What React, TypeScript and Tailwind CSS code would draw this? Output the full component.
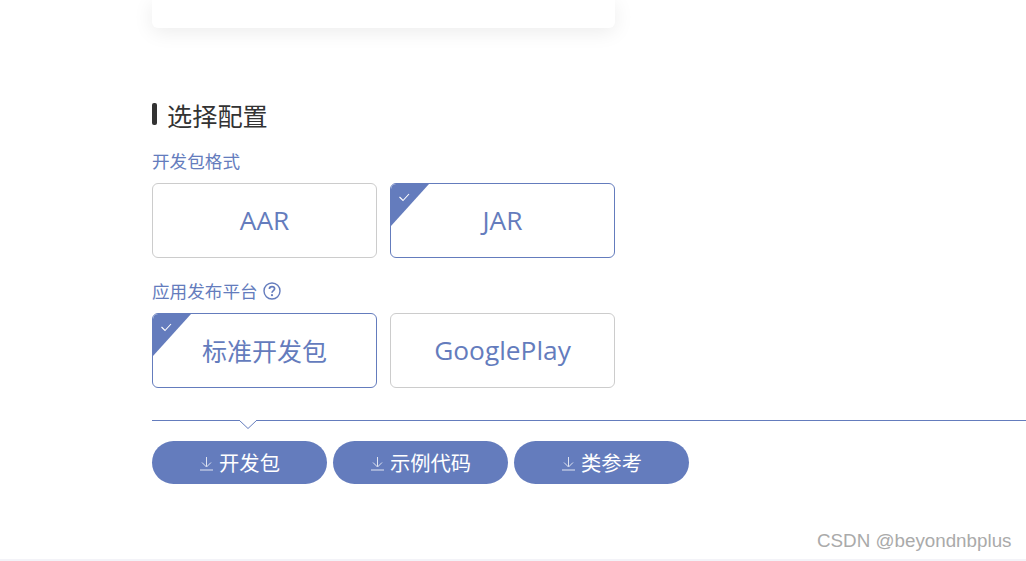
import React from "react";

function Corner() {
  return (
    <svg className="absolute left-0 top-0" width="39" height="43" viewBox="0 0 39 43">
      <path d="M0 5 Q0 0 5 0 H38 L0 42 Z" fill="#647cbd" />
      <path d="M8.5 13 L12 16.5 L18 10" fill="none" stroke="#fff" strokeWidth="1.1" />
    </svg>
  );
}

function Option({ label, selected, latin }: { label: string; selected?: boolean; latin?: boolean }) {
  return (
    <div
      className={
        "relative flex h-[75px] w-[225px] items-center justify-center overflow-hidden rounded-[6px] border bg-white text-[#647cbd] " +
        (selected ? "border-[#647cbd] " : "border-[#cccccc] ") +
        (latin ? "pt-[1px] text-[26.3px]" : "pt-[3px] text-[25px]")
      }
    >
      {selected && <Corner />}
      <span>{label}</span>
    </div>
  );
}

function Download({ label }: { label: string }) {
  return (
    <div className="flex h-[43px] w-[175px] items-center justify-center gap-[5px] rounded-full bg-[#647cbd] pt-[1px] text-[20.3px] text-white">
      <svg width="15" height="15" viewBox="0 0 15 15" fill="none" stroke="#dfe4f2" strokeWidth="1">
        <path d="M7.5 1 V10.5 M3 6.5 L7.5 11 L12 6.5 M1 14 H14" />
      </svg>
      <span>{label}</span>
    </div>
  );
}

export default function App() {
  return (
    <div
      className="relative h-[561px] w-[1026px] overflow-hidden bg-white"
      style={{ fontFamily: '"Open Sans", "Noto Sans CJK SC", sans-serif' }}
    >
      <div className="ml-[152px] h-[28px] w-[463px] rounded-b-[6px] bg-white shadow-[0_4px_20px_rgba(0,0,0,0.08)]" />

      <div className="ml-[152px] mt-[70px] flex h-[36px] items-center gap-[10px]">
        <div className="mb-[4px] h-[22px] w-[5px] rounded-[2px] bg-[#333333]" />
        <div className="text-[25.2px] leading-[36px] text-[#333333]">选择配置</div>
      </div>

      <div className="ml-[152px] mt-[14px] h-[26px] text-[17.6px] leading-[26px] text-[#647cbd]">开发包格式</div>
      <div className="ml-[152px] mt-[9px] flex gap-[13px]">
        <Option label="AAR" latin />
        <Option label="JAR" selected latin />
      </div>

      <div className="ml-[152px] mt-[20px] flex h-[26px] items-center gap-[5px] text-[17.6px] leading-[26px] text-[#647cbd]">
        <span>应用发布平台</span>
        <svg width="18" height="18" viewBox="0 0 18 18" fill="none" stroke="#647cbd">
          <circle cx="9" cy="9" r="8" strokeWidth="1.4" />
          <path d="M6.4 7 C6.4 5.4 7.6 4.6 9 4.6 C10.5 4.6 11.6 5.5 11.6 6.8 C11.6 8.6 9 8.7 9 10.8" strokeWidth="1.7" />
          <circle cx="9" cy="13.2" r="1.1" fill="#647cbd" stroke="none" />
        </svg>
      </div>
      <div className="ml-[152px] mt-[9px] flex gap-[13px]">
        <Option label="标准开发包" selected />
        <Option label="GooglePlay" latin />
      </div>

      <div className="relative ml-[152px] mt-[32px] h-px bg-[#647cbd]">
        <svg className="absolute left-[86px] top-0" width="20" height="10" viewBox="0 0 20 10">
          <path d="M1 0 L10 8.5 L19 0" fill="#fff" stroke="#647cbd" />
          <path d="M2 0 H18" stroke="#fff" strokeWidth="1.5" />
        </svg>
      </div>

      <div className="ml-[152px] mt-[20px] flex gap-[6px]">
        <Download label="开发包" />
        <Download label="示例代码" />
        <Download label="类参考" />
      </div>

      <div className="absolute bottom-0 left-0 h-[2px] w-full bg-[#f3f3f8]" />
      <div
        className="absolute left-[817px] top-[530px] text-[18.8px] leading-[22px] text-[#aaaaaa]"
        style={{ fontFamily: '"Liberation Sans", sans-serif' }}
      >
        CSDN @beyondnbplus
      </div>
    </div>
  );
}
